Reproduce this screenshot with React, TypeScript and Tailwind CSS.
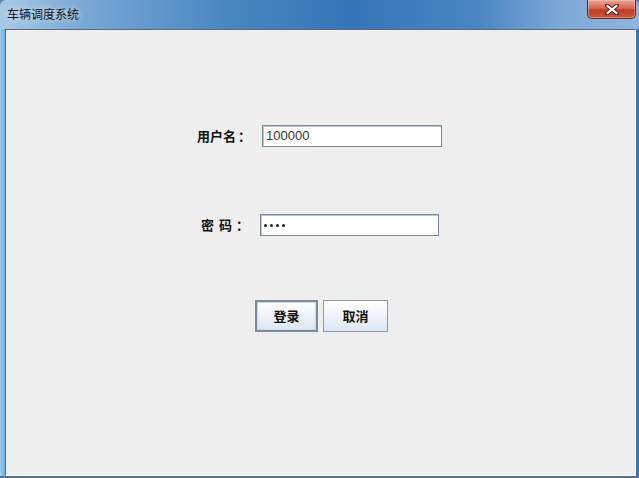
import React from "react";

const cjk = "font-['Noto_Sans_CJK_SC','Noto_Sans',sans-serif]";

function CloseButton() {
  return (
    <div className="mr-[3px] flex h-[19px] w-[49px] items-center justify-center rounded-b-[5px] border border-t-0 border-[#5e2a22] bg-[linear-gradient(to_bottom,#e7a595_0%,#d56a52_45%,#c23c22_55%,#c9563c_100%)] shadow-[inset_0_0_0_1px_rgba(255,210,200,0.45)]">
      <svg width="14" height="11" viewBox="0 0 14 11">
        <path d="M2 1.5 L12 9.5 M12 1.5 L2 9.5" stroke="#5a1d14" strokeWidth="4" strokeLinecap="square" />
        <path d="M2.5 2 L11.5 9 M11.5 2 L2.5 9" stroke="#ffffff" strokeWidth="2.2" strokeLinecap="square" />
      </svg>
    </div>
  );
}

function Field({ children, width }: { children: React.ReactNode; width: string }) {
  return (
    <div className={`flex h-[22px] items-center border border-[#7a8a99] bg-white px-[3px] shadow-[inset_1px_1px_0_#b8c4d0] ${width}`}>
      {children}
    </div>
  );
}

function Button({ label, focused }: { label: string; focused?: boolean }) {
  return (
    <div
      className={`flex h-[32px] items-center justify-center border bg-[linear-gradient(to_bottom,#ffffff_0%,#f1f5fa_40%,#dce6f2_100%)] text-[13px] font-bold text-[#111] ${cjk} ${
        focused
          ? "w-[63px] border-2 border-[#7d8c9c] shadow-[inset_0_0_0_1px_#c9d7e8]"
          : "w-[65px] border-[#8a9aaa]"
      }`}
    >
      {label}
    </div>
  );
}

export default function App() {
  return (
    <div className="flex h-[478px] w-[639px] flex-col overflow-hidden bg-[#5e84ad]">
      {/* title bar */}
      <div className="flex h-[29px] shrink-0 items-start justify-between rounded-t-[6px] bg-[linear-gradient(to_right,#a9c9e4_0%,#7aaad6_12%,#4a87c2_35%,#3574b6_55%,#4a86c3_75%,#7ea9d6_88%,#8fb5dc_100%)]">
        <span className={`ml-[7px] mt-[6px] text-[12px] leading-[16px] text-[#111] ${cjk} [text-shadow:0_0_6px_rgba(255,255,255,0.9)]`}>
          车辆调度系统
        </span>
        <CloseButton />
      </div>

      <div className="flex min-h-0 flex-1">
        <div className="w-[5px] bg-[linear-gradient(to_right,#9ccbee,#6fb2e4)]" />
        {/* client area */}
        <div className="flex w-[631px] flex-col border border-[#5b6b7b] border-r-[#f8f8f8] border-b-[#f8f8f8] bg-[#eeeeee]">
          <div className="mt-[95px] flex items-center">
            <span className={`ml-[191px] flex w-[65px] text-[13px] font-bold text-[#111] ${cjk}`}>
              用户名<span className="ml-[2px]">：</span>
            </span>
            <Field width="w-[180px]">
              <span className="font-['Liberation_Sans',Arial,sans-serif] text-[13px] text-[#333]">100000</span>
            </Field>
          </div>

          <div className="mt-[67px] flex items-center">
            <span className={`ml-[195px] flex w-[59px] text-[13px] font-bold text-[#111] ${cjk}`}>
              密<span className="ml-[5px]">码</span>
              <span className="ml-[4px]">：</span>
            </span>
            <Field width="w-[179px]">
              <span className="flex gap-[3px]">
                <span className="h-[3px] w-[3px] rounded-full bg-[#222]" />
                <span className="h-[3px] w-[3px] rounded-full bg-[#222]" />
                <span className="h-[3px] w-[3px] rounded-full bg-[#222]" />
                <span className="h-[3px] w-[3px] rounded-full bg-[#222]" />
              </span>
            </Field>
          </div>

          <div className="ml-[249px] mt-[64px] flex gap-[5px]">
            <Button label="登录" focused />
            <Button label="取消" />
          </div>
        </div>
        <div className="w-[3px] bg-[#3a76b6]" />
      </div>
      <div className="h-[2px] shrink-0 bg-[#58708a]" />
    </div>
  );
}
